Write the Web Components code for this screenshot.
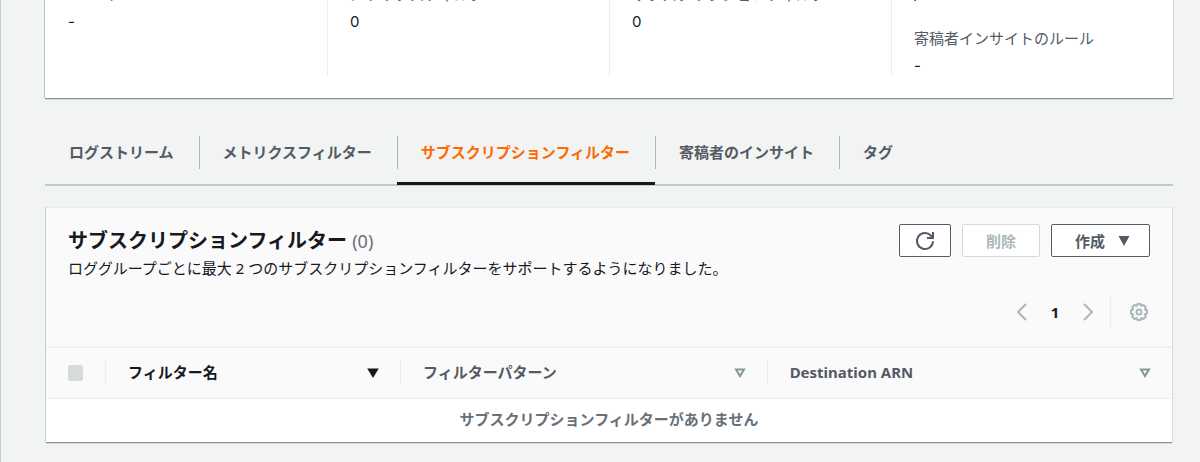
<!DOCTYPE html>
<html lang="ja">
<head>
<meta charset="utf-8">
<title>CloudWatch Logs</title>
<style>
  :root {
    --ink: #16191f;
    --muted: #545b64;
    --soft: #687078;
    --disabled: #aab7b8;
    --line: #eaeded;
    --page: #f2f3f3;
    --orange: #ff6a00;
  }
  body {
    margin: 0;
    background: var(--page);
    color: var(--ink);
    font: 15px/20px "Noto Sans", "Noto Sans CJK JP", sans-serif;
    overflow: hidden;
  }
</style>
</head>
<body>
<log-page>
  <details-card>
    <details-column>
      <detail-item label="KMS キー ID">-</detail-item>
    </details-column>
    <details-column>
      <detail-item label="メトリクスフィルター">0</detail-item>
    </details-column>
    <details-column>
      <detail-item label="サブスクリプションフィルター">0</detail-item>
    </details-column>
    <details-column>
      <detail-item>/aws</detail-item>
      <detail-item label="寄稿者インサイトのルール">-</detail-item>
    </details-column>
  </details-card>
  <tab-bar>
    <tab-link first>ログストリーム</tab-link>
    <tab-link>メトリクスフィルター</tab-link>
    <tab-link active>サブスクリプションフィルター</tab-link>
    <tab-link>寄稿者のインサイト</tab-link>
    <tab-link>タグ</tab-link>
  </tab-bar>
  <filter-panel>
    <span slot="title">サブスクリプションフィルター</span>
    <span slot="count">(0)</span>
    <span slot="description">ロググループごとに最大 2 つのサブスクリプションフィルターをサポートするようになりました。</span>
    <action-button slot="actions" kind="icon" label="更新"><svg width="20" height="20" viewBox="0 0 20 20" fill="none" stroke="currentColor" stroke-width="2"><path d="M18 10.200A8 8 0 1 1 15.800 4.500L17.500 6.200"/><path d="M18 1v6h-6"/></svg></action-button>
    <action-button slot="actions" disabled>削除</action-button>
    <action-button slot="actions">作成<svg width="12" height="10" viewBox="0 0 12 10" fill="currentColor" style="margin-left:13px"><path d="M.5 0h11L6 10z"/></svg></action-button>
    <page-tools slot="tools"></page-tools>
    <filter-table></filter-table>
  </filter-panel>
</log-page>

<script>
function define(name, html, setup) {
  const template = document.createElement('template');
  template.innerHTML = html;
  customElements.define(name, class extends HTMLElement {
    constructor() {
      super();
      this.attachShadow({ mode: 'open' }).append(template.content.cloneNode(true));
    }
    connectedCallback() {
      if (setup) setup(this, this.shadowRoot);
    }
  });
}

/* The page is scrolled so that the details card starts above the window. */
define('log-page', `
  <style>
    :host { display: flow-root; border-left: 1px solid #c9d0d3; min-height: 100vh; box-sizing: border-box; }
    main { padding: 0 27px 20px 44px; margin-top: -16px; }
  </style>
  <main><slot></slot></main>`);

define('details-card', `
  <style>
    :host {
      display: grid; grid-template-columns: repeat(4, 1fr);
      background: #fff; padding-bottom: 22px;
      box-shadow: 0 1px 0 #879596, 0 2px 0 #d5dbdb, -1px 0 0 #bac5c7, 1px 0 0 #d5dbdb;
    }
  </style>
  <slot></slot>`);

define('details-column', `
  <style>
    :host { display: flex; flex-direction: column; gap: 24px; padding: 0 22px; border-left: 1px solid var(--line); }
    :host(:first-child) { border-color: transparent; }
  </style>
  <slot></slot>`);

define('detail-item', `
  <style>
    :host { display: flex; flex-direction: column; gap: 8px; }
    .label { color: var(--muted); }
    .label:empty { display: none; }
    .value { font-family: Inter, "Noto Sans CJK JP", sans-serif; }
  </style>
  <div class="label"></div><div class="value"><slot></slot></div>`,
  (host, root) => { root.querySelector('.label').textContent = host.getAttribute('label') || ''; });

define('tab-bar', `
  <style>
    :host { display: block; margin-top: 38px; }
    nav { display: flex; border-bottom: 2px solid #c0cbcc; }
  </style>
  <nav><slot></slot></nav>`);

define('tab-link', `
  <style>
    :host { display: block; margin-bottom: -1px; }
    a {
      display: block; padding-bottom: 13px; border-bottom: 3px solid transparent;
      color: var(--muted); font-weight: 700; line-height: 33px; text-decoration: none; white-space: nowrap;
    }
    span { display: block; padding: 0 25px 0 23px; border-left: 1px solid var(--disabled); }
    :host([first]) span { border-color: transparent; }
    :host([active]) a { color: var(--orange); border-color: var(--ink); }
  </style>
  <a href="#"><span><slot></slot></span></a>`);

define('filter-panel', `
  <style>
    :host {
      display: block; margin: 21px 1px 0; background: #fff; border-top: 1px solid var(--line);
      box-shadow: 0 1px 0 #879596, 0 2px 0 #d5dbdb, -1px 0 0 #c5cdce, 1px 0 0 #d5dbdb;
    }
    header { background: #fafafa; padding: 16px 22px 18px; border-bottom: 2px solid #f0f1f1; }
    .top { display: flex; justify-content: space-between; align-items: flex-start; }
    h2 { margin: 0; font-size: 20px; line-height: 33px; font-weight: 700; }
    .count { color: var(--soft); font-size: 18px; font-weight: 400; }
    p { margin: 0; line-height: 20px; }
    .actions { display: flex; gap: 11px; }
    .tools { display: flex; justify-content: flex-end; margin-top: 17px; padding-right: 2px; }
  </style>
  <header>
    <div class="top">
      <div>
        <h2><slot name="title"></slot> <span class="count"><slot name="count"></slot></span></h2>
        <p><slot name="description"></slot></p>
      </div>
      <div class="actions"><slot name="actions"></slot></div>
    </div>
    <div class="tools"><slot name="tools"></slot></div>
  </header>
  <slot></slot>`);

define('action-button', `
  <style>
    :host { display: block; }
    button {
      display: flex; align-items: center; justify-content: center; height: 33px; padding: 0 23px;
      background: #fff; border: 1px solid var(--muted); border-radius: 2px;
      color: var(--muted); font: inherit; font-weight: 700; white-space: nowrap;
    }
    :host([kind="icon"]) button { padding: 0 15px; }
    button:disabled { color: var(--disabled); border-color: #d5dbdb; }
    :host(:last-of-type) button { padding-right: 19px; }
  </style>
  <button type="button"><slot></slot></button>`,
  (host, root) => {
    const button = root.querySelector('button');
    button.disabled = host.hasAttribute('disabled');
    if (host.hasAttribute('label')) button.setAttribute('aria-label', host.getAttribute('label'));
  });

define('page-tools', `
  <style>
    :host { display: flex; align-items: center; height: 33px; }
    button { display: flex; padding: 0; border: 0; background: none; color: var(--disabled); font: inherit; }
    .number { width: 56px; justify-content: center; color: var(--ink); font-weight: 700; }
    .settings { align-items: center; height: 33px; margin-left: 16px; padding-left: 19px; border-left: 1px solid var(--line); }
    svg { display: block; fill: none; stroke: currentColor; stroke-width: 2; }
  </style>
  <button type="button" aria-label="前へ" disabled><svg width="11" height="18" viewBox="0 0 11 18"><path d="M10 1 2 9l8 8"/></svg></button>
  <button type="button" class="number">1</button>
  <button type="button" aria-label="次へ" disabled><svg width="11" height="18" viewBox="0 0 11 18"><path d="m1 1 8 8-8 8"/></svg></button>
  <button type="button" class="settings" aria-label="設定"><svg width="18" height="18" viewBox="0 0 18 18" stroke-linejoin="round"><path d="M7.400 1h3.200l.6 1.900 2.200-.9 2.400 2.300-1 2.100 2.200.9v3.300l-2.200.9 1 2.200-2.400 2.300-2.200-.9-.6 1.900H7.400l-.6-1.900-2.200.9-2.400-2.300 1-2.200-2.200-.9V7.300l2.200-.9-1-2.100L4.600 2l2.200.9z"/><circle cx="9" cy="9" r="2.500"/></svg></button>`);

define('sort-header', `
  <style>
    :host { display: block; }
    button {
      display: flex; align-items: center; justify-content: space-between; width: 100%; height: 25px;
      padding: 0 21px 2px 22px; border: 0; border-left: 1px solid var(--line); background: none;
      color: var(--muted); font: inherit; font-weight: 700; text-align: left;
    }
    svg { margin-top: 2px; color: #879596; fill: none; stroke: currentColor; stroke-width: 2; }
    :host([sorted]) button, :host([sorted]) svg { color: var(--ink); }
    :host([sorted]) svg { fill: currentColor; }
  </style>
  <button type="button"><span><slot></slot></span><svg width="12" height="10" viewBox="0 0 12 10"><path d="M2 1.500h8L6 8z"/></svg></button>`);

define('filter-table', `
  <style>
    :host { display: block; }
    table { width: 100%; table-layout: fixed; border-collapse: collapse; }
    th, td { padding: 0; }
    thead tr { background: #fafafa; height: 50px; border-bottom: 1px solid var(--line); }
    .select { width: 59px; }
    .name { width: 295px; }
    .arn { width: 36%; }
    input { display: block; appearance: none; width: 15px; height: 16px; margin: 0 0 0 22px; background: #d5dbdb; border-radius: 2px; }
    td { height: 41px; padding-bottom: 2px; text-align: center; color: var(--soft); font-weight: 700; }
  </style>
  <table>
    <thead><tr>
      <th class="select"><input type="checkbox" aria-label="すべて選択" disabled></th>
      <th class="name"><sort-header sorted>フィルター名</sort-header></th>
      <th><sort-header>フィルターパターン</sort-header></th>
      <th class="arn"><sort-header>Destination ARN</sort-header></th>
    </tr></thead>
    <tbody><tr><td colspan="4">サブスクリプションフィルターがありません</td></tr></tbody>
  </table>`);
</script>
</body>
</html>
